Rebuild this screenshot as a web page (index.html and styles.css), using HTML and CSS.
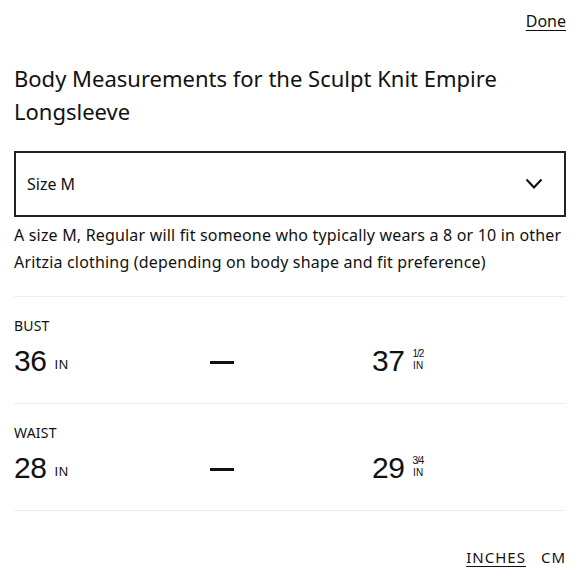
FILE: index.html
```html
<!DOCTYPE html>
<html lang="en">
<head>
<meta charset="utf-8">
<title>Body Measurements</title>
<link rel="stylesheet" href="styles.css">
</head>
<body>
<div class="page">
  <div class="topbar"><a class="done" href="#">Done</a></div>
  <h1 class="title">Body Measurements for the Sculpt Knit Empire Longsleeve</h1>
  <div class="select">
    <span class="select-label">Size M</span>
    <svg class="chevron" width="18" height="12" viewBox="0 0 18 12"><polyline points="1.5,1.5 9,9.5 16.5,1.5" fill="none" stroke="#111" stroke-width="2.2"/></svg>
  </div>
  <p class="desc">A size M, Regular will fit someone who typically wears a 8 or 10 in other Aritzia clothing (depending on body shape and fit preference)</p>
  <div class="section">
    <div class="label">BUST</div>
    <div class="row">
      <div class="val"><span class="num">36</span><span class="unit">IN</span></div>
      <div class="dash-cell"><span class="dash"></span></div>
      <div class="val"><span class="num">37</span><span class="frac"><span class="fr">1/2</span><span class="fu">IN</span></span></div>
    </div>
  </div>
  <div class="section">
    <div class="label">WAIST</div>
    <div class="row">
      <div class="val"><span class="num">28</span><span class="unit">IN</span></div>
      <div class="dash-cell"><span class="dash"></span></div>
      <div class="val"><span class="num">29</span><span class="frac"><span class="fr">3/4</span><span class="fu">IN</span></span></div>
    </div>
  </div>
  <div class="units"><a class="unit-link active" href="#">INCHES</a><a class="unit-link" href="#">CM</a></div>
</div>
</body>
</html>
```
FILE: styles.css
```css
html, body { margin: 0; padding: 0; background: #fff; }
body { font-family: "Noto Sans", sans-serif; color: #111; }
.page { padding: 11px 14px 0 14px; }
.topbar { display: flex; justify-content: flex-end; height: 20px; }
.done { font-size: 16px; line-height: 20px; color: #111; text-decoration: underline; text-underline-offset: 3px; text-decoration-thickness: 1px; }
.title { margin: 31px 0 0 0; font-size: 22px; font-weight: 400; line-height: 33px; width: 520px; }
.select { margin-top: 23px; height: 62px; border: 2px solid #222; display: flex; align-items: center; justify-content: space-between; padding: 0 21px 0 11px; }
.select-label { font-size: 16px; }
.chevron { display: block; }
.desc { margin: 5px 0 0 0; font-size: 16px; line-height: 27px; letter-spacing: 0.18px; padding-bottom: 20px; }
.section { border-top: 1px solid #eeeeee; padding: 19px 0 24px 0; }
.label { font-size: 14px; line-height: 20px; letter-spacing: 0.2px; }
.row { margin-top: 7px; display: grid; grid-template-columns: 196px 162px 1fr; align-items: center; height: 36px; }
.val { display: flex; align-items: flex-end; font-family: "Liberation Sans", Arial, sans-serif; }
.num { font-size: 30px; line-height: 36px; letter-spacing: -0.5px; }
.unit { font-size: 13px; line-height: 14px; margin-left: 8px; margin-bottom: 7px; letter-spacing: 0.8px; }
.dash-cell { display: flex; align-items: center; padding-top: 3px; }
.dash { display: block; width: 24px; height: 3px; background: #111; }
.frac { display: flex; flex-direction: column; align-items: center; margin-left: 8px; margin-bottom: 8px; }
.fr { font-size: 10px; line-height: 11.5px; letter-spacing: -1px; margin-right: 1px; }
.fu { font-size: 10px; line-height: 11.5px; letter-spacing: 0.3px; }
.units { border-top: 1px solid #eeeeee; display: flex; justify-content: flex-end; gap: 15px; padding-top: 36px; }
.unit-link { font-size: 15px; line-height: 20px; color: #111; text-decoration: none; letter-spacing: 1px; }
.unit-link.active { text-decoration: underline; text-underline-offset: 3px; }
```
